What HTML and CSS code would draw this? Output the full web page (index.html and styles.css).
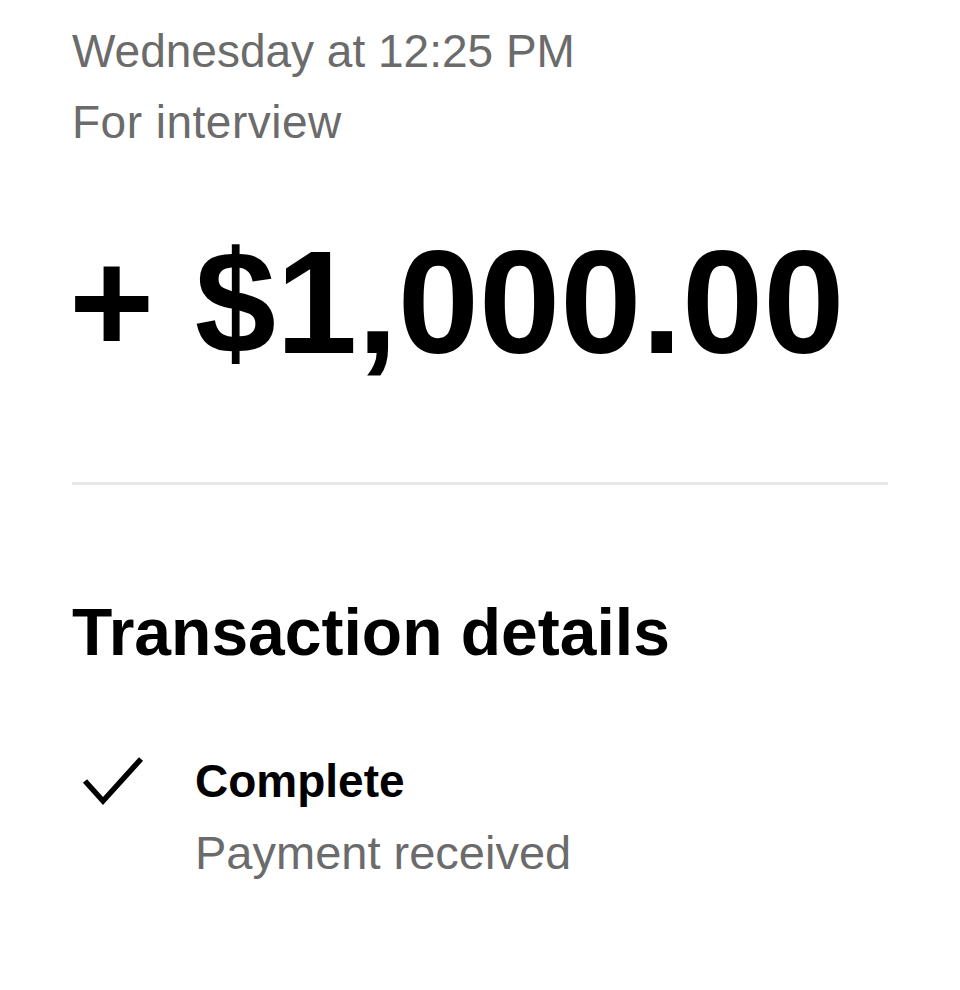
FILE: index.html
```html
<!DOCTYPE html>
<html lang="en">
<head>
    <meta charset="UTF-8" />
    <meta name="viewport" content="width=device-width, initial-scale=1.0" />
    <title>Transaction</title>
    <link rel="stylesheet" href="styles.css">
</head>
<body>
    <div class="meta">
        <div>Wednesday at 12:25 PM</div>
        <div class="meta-note">For interview</div>
    </div>

    <div class="amount">+ $1,000.00</div>

    <hr class="divider">

    <h2 class="section-title">Transaction details</h2>

    <div class="status-row">
        <svg class="status-icon" width="72" height="72" viewBox="0 0 72 72">
            <polyline points="7,36 25,56 63,14" fill="none" stroke="#000" stroke-width="5.5" />
        </svg>
        <div class="status-text">
            <div class="status-title">Complete</div>
            <div class="status-sub">Payment received</div>
        </div>
    </div>
</body>
</html>
```

FILE: styles.css
```css
body {
    font-family: "Liberation Sans", Arial, sans-serif;
    margin: 0;
    padding: 16px 72px 0;
    background-color: #fff;
    color: #000;
}

.meta {
    font-size: 46px;
    line-height: 71px;
    color: #6b6b6b;
}

.meta-note {
    letter-spacing: 0.5px;
}

.amount {
    margin-top: 72px;
    margin-left: -3px;
    font-size: 146px;
    line-height: 146px;
    font-weight: bold;
}

.divider {
    margin: 106px 0 0;
    border: none;
    height: 3px;
    background-color: #e8e8e8;
}

.section-title {
    margin: 114px 0 0;
    font-size: 66px;
    line-height: 66px;
    font-weight: bold;
}

.status-row {
    display: flex;
    gap: 45px;
    margin-top: 80px;
}

.status-icon {
    margin-left: 6px;
    flex-shrink: 0;
}

.status-text {
    font-size: 46px;
    line-height: 72px;
}

.status-title {
    font-weight: bold;
}

.status-sub {
    font-size: 47px;
    color: #6b6b6b;
}
```
